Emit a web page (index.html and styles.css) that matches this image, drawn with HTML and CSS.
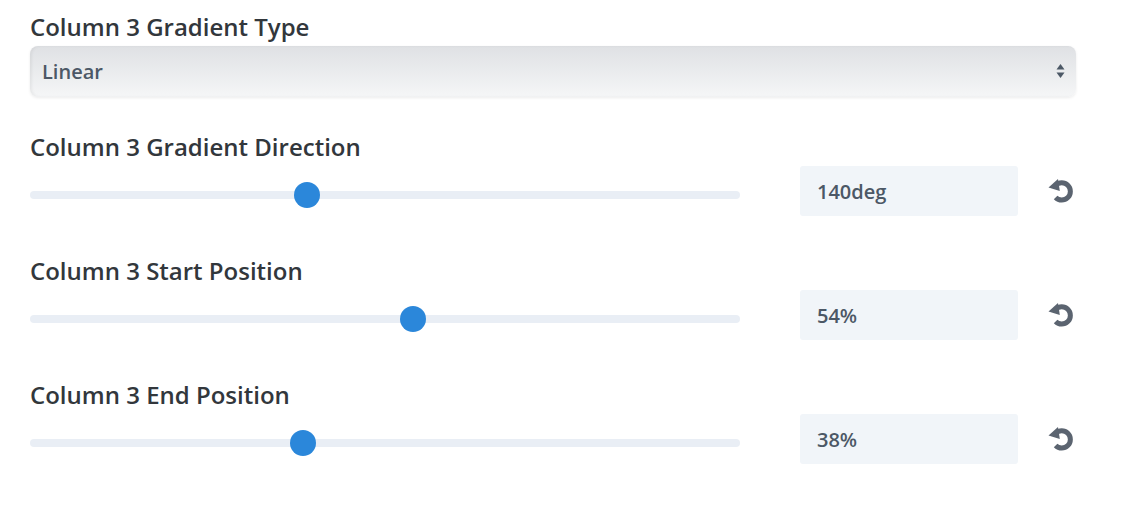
FILE: index.html
```html
<!DOCTYPE html>
<html lang="en">
<head>
    <meta charset="UTF-8">
    <meta name="viewport" content="width=device-width, initial-scale=1.0">
    <title>Column 3 Gradient</title>
    <link rel="stylesheet" href="styles.css">
</head>
<body>
    <div class="option option-select">
        <label class="option-label">Column 3 Gradient Type</label>
        <div class="select-wrap">
            <select class="select">
                <option>Linear</option>
                <option>Radial</option>
            </select>
            <svg class="select-arrows" width="9" height="18" viewBox="0 0 9 18">
                <path d="M4.5 2 L8.5 7.5 H0.5 Z" fill="#4c5866"/>
                <path d="M4.5 16 L8.5 10.5 H0.5 Z" fill="#4c5866"/>
            </svg>
        </div>
    </div>

    <div class="option">
        <label class="option-label">Column 3 Gradient Direction</label>
        <div class="range-row">
            <div class="track"><span class="thumb" style="left: 39%"></span></div>
            <input class="value" type="text" value="140deg">
            <button class="reset" title="Reset">
                <svg width="30" height="30" viewBox="0 0 30 30"><path d="M9.6 9.4 A8.6 8.6 0 1 1 9.6 21.4" fill="none" stroke="#5b6470" stroke-width="5"/><path d="M2.5 11.5 L12 3 L13.8 15 Z" fill="#5b6470"/></svg>
            </button>
        </div>
    </div>

    <div class="option">
        <label class="option-label">Column 3 Start Position</label>
        <div class="range-row">
            <div class="track"><span class="thumb" style="left: 54%"></span></div>
            <input class="value" type="text" value="54%">
            <button class="reset" title="Reset">
                <svg width="30" height="30" viewBox="0 0 30 30"><path d="M9.6 9.4 A8.6 8.6 0 1 1 9.6 21.4" fill="none" stroke="#5b6470" stroke-width="5"/><path d="M2.5 11.5 L12 3 L13.8 15 Z" fill="#5b6470"/></svg>
            </button>
        </div>
    </div>

    <div class="option">
        <label class="option-label">Column 3 End Position</label>
        <div class="range-row">
            <div class="track"><span class="thumb" style="left: 38.5%"></span></div>
            <input class="value" type="text" value="38%">
            <button class="reset" title="Reset">
                <svg width="30" height="30" viewBox="0 0 30 30"><path d="M9.6 9.4 A8.6 8.6 0 1 1 9.6 21.4" fill="none" stroke="#5b6470" stroke-width="5"/><path d="M2.5 11.5 L12 3 L13.8 15 Z" fill="#5b6470"/></svg>
            </button>
        </div>
    </div>
</body>
</html>
```

FILE: styles.css
```css
body { margin: 0; padding: 11px 46px 0 30px; font-family: "Open Sans", sans-serif; background: #fff; color: #32373c; }
.option { margin-bottom: 39px; }
.option-select { margin-bottom: 34px; }
.option-label { display: block; font-size: 24px; font-weight: 600; line-height: 32px; margin-bottom: 3px; color: #32373c; }
.select-wrap { position: relative; }
.select { display: block; appearance: none; -webkit-appearance: none; width: 100%; height: 51px; border: 0; border-radius: 8px; padding: 0 12px; font-family: "Open Sans", sans-serif; font-size: 20px; font-weight: 600; color: #4c5866; background: linear-gradient(#dfe1e4, #f5f6f7); box-shadow: inset 2px 0 3px rgba(0,0,0,0.05), 0 1px 3px rgba(0,0,0,0.08); outline: none; }
.select-arrows { position: absolute; right: 11px; top: 16px; pointer-events: none; }
.range-row { display: flex; align-items: center; height: 50px; }
.track { position: relative; flex: none; width: 710px; height: 8px; margin-top: 8px; border-radius: 4px; background: #e9eef5; }
.thumb { position: absolute; top: 50%; width: 26px; height: 26px; margin: -13px 0 0 -13px; border-radius: 50%; background: #2b87da; }
.value { flex: none; box-sizing: border-box; width: 218px; min-width: 0; height: 50px; margin: 0 0 0 60px; border: 0; border-radius: 3px; padding: 0 17px; background: #f1f5f9; font-family: "Open Sans", sans-serif; font-size: 20px; font-weight: 600; color: #4c5866; outline: none; }
.reset { flex: none; display: flex; align-items: center; justify-content: center; width: 30px; height: 30px; margin-left: 28px; padding: 0; border: 0; background: none; }
```
